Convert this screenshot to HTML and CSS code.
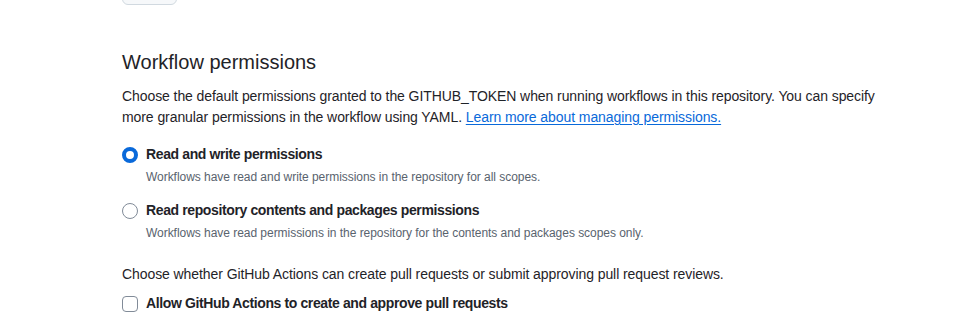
FILE: index.html
```html
<!DOCTYPE html>
<html lang="en">
<head>
  <meta charset="UTF-8">
  <title>Actions settings</title>
  <link rel="stylesheet" href="styles.css">
</head>
<body>
  <div class="settings">
    <button class="btn" type="button" aria-label="Save"></button>

    <section class="section">
      <h2 class="subhead">Workflow permissions</h2>
      <p class="note">Choose the default permissions granted to the GITHUB_TOKEN when running workflows in this repository. You can specify more granular permissions in the workflow using YAML. <a href="#">Learn more about managing permissions.</a></p>

      <div class="option">
        <label class="option-label">
          <input type="radio" name="perm" checked>
          <span>Read and write permissions</span>
        </label>
        <p class="option-desc">Workflows have read and write permissions in the repository for all scopes.</p>
      </div>

      <div class="option">
        <label class="option-label">
          <input type="radio" name="perm">
          <span>Read repository contents and packages permissions</span>
        </label>
        <p class="option-desc">Workflows have read permissions in the repository for the contents and packages scopes only.</p>
      </div>

      <p class="note note-gap">Choose whether GitHub Actions can create pull requests or submit approving pull request reviews.</p>
      <label class="option-label check">
        <input type="checkbox">
        <span>Allow GitHub Actions to create and approve pull requests</span>
      </label>
    </section>
  </div>
</body>
</html>
```

FILE: styles.css
```css
* {
  margin: 0;
  padding: 0;
  box-sizing: border-box;
}
body {
  background: #fff;
  color: #1f2328;
  font-family: 'Liberation Sans', Arial, sans-serif;
  font-size: 14px;
  line-height: 21px;
  overflow: hidden;
}
.settings {
  padding-left: 122px;
  width: 900px;
}
.btn {
  display: block;
  width: 55px;
  height: 32px;
  margin-top: -27px;
  background: #f6f8fa;
  border: 1px solid #d1d9e0;
  border-radius: 6px;
}
.subhead {
  margin-top: 42px;
  font-size: 20px;
  font-weight: 400;
  line-height: 30px;
  margin-bottom: 9px;
}
.note {
  letter-spacing: -0.08px;
}
.note a {
  color: #0969da;
  text-decoration: underline;
  text-underline-offset: 2px;
}
.option {
  margin-top: 16px;
}
.option + .option {
  margin-top: 14px;
}
.option-label {
  display: flex;
  align-items: center;
  gap: 8px;
  font-weight: 600;
}
.option-label span {
  letter-spacing: -0.38px;
}
.option-desc {
  margin-top: 3px;
  padding-left: 24px;
  font-size: 12px;
  line-height: 18px;
  color: #59636e;
  letter-spacing: -0.04px;
}
.note-gap {
  margin-top: 22px;
}
.check {
  margin-top: 8px;
}
input[type="radio"],
input[type="checkbox"] {
  appearance: none;
  width: 16px;
  height: 16px;
  margin: 0;
  flex-shrink: 0;
  border: 1px solid #818b98;
  background: #fff;
}
input[type="radio"] {
  border-radius: 50%;
}
input[type="radio"]:checked {
  border: 4px solid #0969da;
}
input[type="checkbox"] {
  border-radius: 4px;
}
```
